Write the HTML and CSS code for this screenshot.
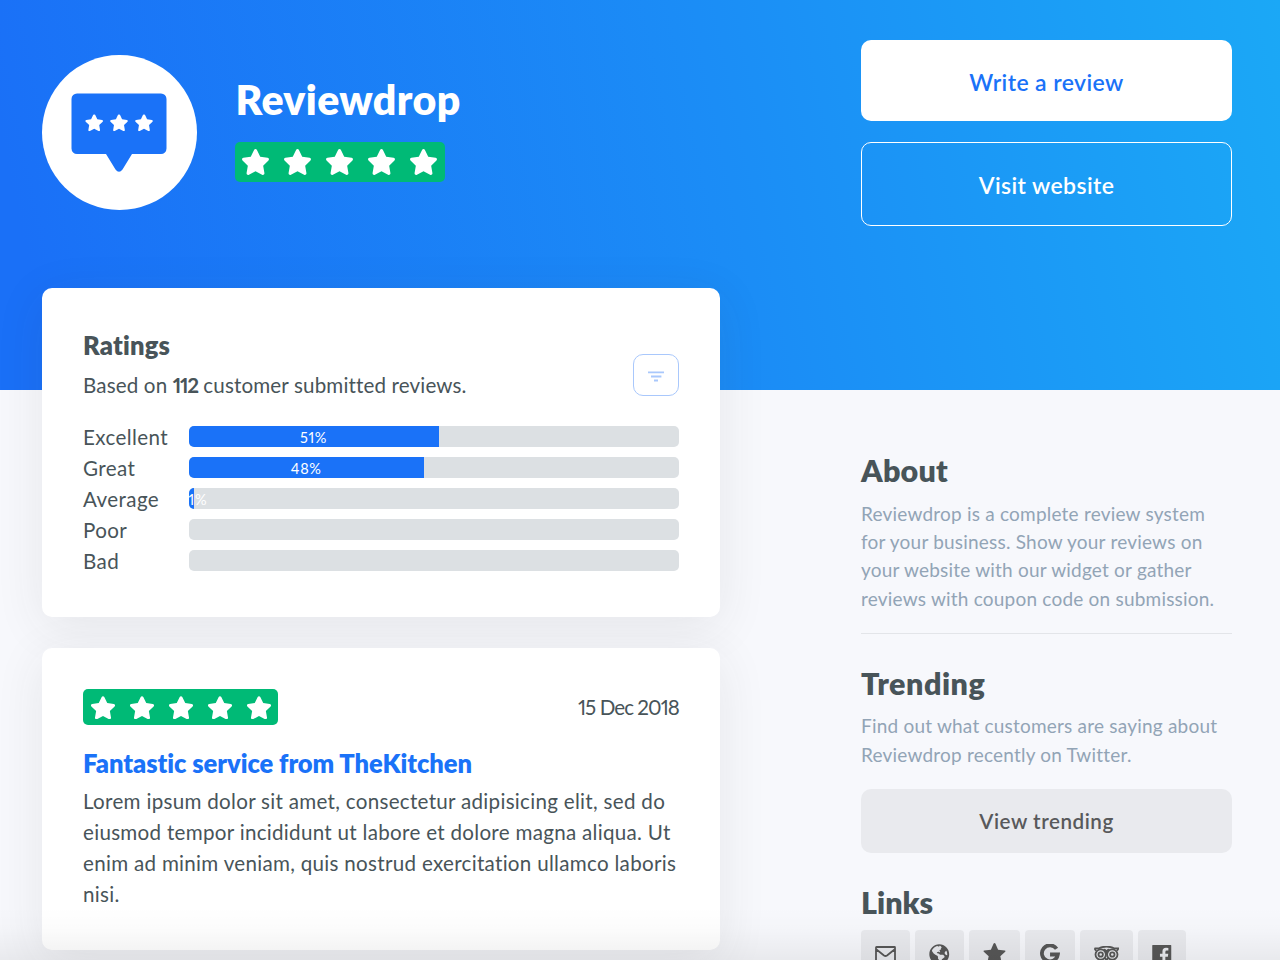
FILE: index.html
```html
<!DOCTYPE html>
<html lang="en">
<head>
<meta charset="utf-8">
<title>Reviewdrop</title>
<link rel="stylesheet" href="styles.css">
</head>
<body>
<svg class="defs" width="0" height="0" aria-hidden="true">
  <symbol id="star" viewBox="0 0 576 512"><path d="M259.3 17.8L194 150.2 47.9 171.5c-26.2 3.8-36.7 36.1-17.7 54.6l105.7 103-25 145.5c-4.5 26.3 23.2 46 46.4 33.7L288 439.6l130.7 68.7c23.2 12.2 50.9-7.4 46.4-33.7l-25-145.5 105.7-103c19-18.5 8.5-50.8-17.7-54.6L382 150.2 316.7 17.8c-11.7-23.6-45.6-23.9-57.4 0z"/></symbol>
</svg>

<header class="hero">
  <div class="brand">
    <div class="logo">
      <svg width="96" height="80" viewBox="0 0 96 80">
        <path class="bubble" d="M6 .5h84a5.500 5.500 0 0 1 5.500 5.500v49.500a5.500 5.500 0 0 1-5.500 5.500H61L51.500 76.500q-3.500 4.500-7 0L35 61H6a5.500 5.500 0 0 1-5.500-5.500V6A5.500 5.500 0 0 1 6 .5z"/>
        <use href="#star" x="13.700" y="21.200" width="19" height="17"/>
        <use href="#star" x="38.500" y="21.200" width="19" height="17"/>
        <use href="#star" x="63.500" y="21.200" width="19" height="17"/>
      </svg>
    </div>
    <div class="brand-text">
      <h1>Reviewdrop</h1>
      <div class="stars stars-lg">
        <svg><use href="#star"/></svg><svg><use href="#star"/></svg><svg><use href="#star"/></svg><svg><use href="#star"/></svg><svg><use href="#star"/></svg>
      </div>
    </div>
  </div>
  <div class="actions">
    <a class="btn btn-white">Write a review</a>
    <a class="btn btn-outline">Visit website</a>
  </div>
</header>

<main class="layout">
  <div class="feed">
    <section class="card ratings">
      <div class="ratings-head">
        <div>
          <h3>Ratings</h3>
          <p class="based">Based on <b>112</b> customer submitted reviews.</p>
        </div>
        <button class="filter" aria-label="Filter">
          <svg width="16" height="11" viewBox="0 0 16 11"><path d="M0 1.300h16M3 5.500h10.400M6 9.500h4"/></svg>
        </button>
      </div>
      <div class="bars">
        <span>Excellent</span><div class="track"><div class="fill" style="width:51%">51%</div></div>
        <span>Great</span><div class="track"><div class="fill" style="width:48%">48%</div></div>
        <span>Average</span><div class="track"><div class="fill" style="width:1.100%">1%</div></div>
        <span>Poor</span><div class="track"></div>
        <span>Bad</span><div class="track"></div>
      </div>
    </section>

    <section class="card review">
      <div class="review-head">
        <div class="stars stars-sm">
          <svg><use href="#star"/></svg><svg><use href="#star"/></svg><svg><use href="#star"/></svg><svg><use href="#star"/></svg><svg><use href="#star"/></svg>
        </div>
        <time>15 Dec 2018</time>
      </div>
      <h3 class="review-title">Fantastic service from TheKitchen</h3>
      <p class="review-body">Lorem ipsum dolor sit amet, consectetur adipisicing elit, sed do<br>eiusmod tempor incididunt ut labore et dolore magna aliqua. Ut<br>enim ad minim veniam, quis nostrud exercitation ullamco laboris<br>nisi.</p>
    </section>
  </div>

  <aside class="side">
    <section class="about">
      <h2>About</h2>
      <p>Reviewdrop is a complete review system<br>for your business. Show your reviews on<br>your website with our widget or gather<br>reviews with coupon code on submission.</p>
    </section>
    <section class="trending">
      <h2>Trending</h2>
      <p>Find out what customers are saying about<br>Reviewdrop recently on Twitter.</p>
      <a class="btn btn-grey">View trending</a>
    </section>
    <section class="links">
      <h2>Links</h2>
      <div class="link-row">
        <a><svg class="mail" width="21" height="17" viewBox="0 0 21 17"><path d="M1 1.500Q1 1 1.500 1h18Q20 1 20 1.500v14q0 .5-.5.500H1.500Q1 16 1 15.500zM1.500 3.500l7.500 6q1.500 1 3 0l7.500-6"/></svg></a>
        <a><svg width="20.500" height="20.500" viewBox="0 0 496 512"><path d="M248 8C111 8 0 119 0 256s111 248 248 248 248-111 248-248S385 8 248 8zm82.300 357.600c-3.900 3.900-8 8-11.300 11.300-3 3-5.100 6.700-6.200 10.700-1.500 5.700-2.700 11.400-4.800 16.900l-17.300 46.700c-13.700 3-28 4.700-42.700 4.700v-27.300c1.700-12.700-7.700-36.500-22.600-51.500-6-6-9.400-14.200-9.400-22.600v-32c0-11.600-6.300-22.300-16.500-28-14.400-8-34.800-19.100-48.800-26.200-11.500-5.800-22.100-13.100-31.700-21.700l-.8-.7c-6.900-6.200-13-13.200-18.200-20.900-9.400-13.800-24.700-36.500-34.600-51.200C67.600 122.200 140.900 66.500 199.200 49.700l28 14c11.500 5.700 25-2.600 25-15.400v-6.100c8.500 1 17.200 2.600 26 5.100l25 24.600c5.800 5.800 5.800 15 0 20.700l-4.200 4.200-9.100 9.100c-2.900 2.900-2.900 7.500 0 10.400l4.200 4.200c2.900 2.900 2.900 7.500 0 10.400l-8 8c-1.500 1.400-3.600 2.200-5.600 2.200H271c-2 0-3.900.8-5.300 2.100l-10.100 9.800c-2.500 2.500-3.200 6.300-1.600 9.500l15.900 31.700c2.700 5.400-1.200 11.800-7.200 11.800h-5.700c-2 0-3.800-.7-5.300-2l-9.400-8.200c-4.300-3.700-10.200-4.900-15.500-3.100l-31.600 10.500c-5 1.700-8.400 6.200-8.400 11.500 0 4.300 2.500 8.300 6.400 10.300l11.200 5.600c9.500 4.800 20 7.300 30.700 7.300s22.900 27.700 32.400 32.500h67.300c8.600 0 16.800 3.400 22.900 9.500l13.800 13.800c5.800 5.800 9 13.600 9 21.800s-3.500 16.500-9.700 22.600zM417 274.200c-5.800-1.400-10.800-5-14.100-9.900l-18-27c-5.400-8.100-5.400-18.600 0-26.600l19.600-29.400c2.300-3.500 5.500-6.300 9.200-8.200l13-6.500c13.500 27 21.300 57.300 21.300 89.400 0 8.700-.7 17.200-1.700 25.600z"/></svg></a>
        <a><svg class="solid-star" width="23" height="22" viewBox="0 0 23 22"><path d="M11.500 0q.6 0 1 .8l2.600 6 6.700.7q1.200.3.400 1.300l-4.900 4.500 1.400 6.600q.1 1.200-1 .7l-6.200-3.300-6.200 3.300q-1.100.5-1-.7l1.400-6.600L.8 8.800Q0 7.800 1.200 7.500l6.700-.7 2.600-6q.4-.8 1-.8z"/></svg></a>
        <a><svg width="21.500" height="21" viewBox="0 0 21 21"><path class="g" d="M17.300 4.800A8 8 0 1 0 18.600 10.500H10.800"/></svg></a>
        <a><svg class="trip" width="25" height="16" viewBox="0 0 25 16"><path d="M.5 2.300h4.500Q12.500-1.200 20 2.300h4.500l-1.500 2.400M.5 2.300L2 4.700M9.500 3.800q2-.5 3 2.500 1-3 3-2.500"/><circle cx="6.700" cy="8.500" r="5.200"/><circle cx="18.300" cy="8.500" r="5.200"/><circle cx="6.700" cy="8.500" r="2.200"/><circle cx="18.300" cy="8.500" r="2.200"/><path d="M11 12l1.500 2.300L14 12"/></svg></a>
        <a><svg width="19.500" height="19" viewBox="0 0 19 19"><path d="M0 .5q0-.5.5-.5h18q.5 0 .5.500v18q0 .5-.5.500h-5.400v-7.300h2.500l.4-2.900h-2.900V7q0-1.400 1.400-1.400h1.600V3q-1-.2-2.300-.2-3.600 0-3.600 3.700v2.300H7.700v2.900h2.500V19H.5q-.5 0-.5-.5z"/></svg></a>
      </div>
    </section>
  </aside>
</main>
<div class="fade"></div>
</body>
</html>
```

FILE: styles.css
```css
* { box-sizing: border-box; }
html, body { height: 960px; overflow: hidden; }
body {
  margin: 0;
  background: #f7f8fc;
  color: #485459;
  font-family: Lato, "Open Sans", sans-serif;
  font-size: 20.600px;
  line-height: 31px;
  letter-spacing: 0.290px;
  font-variant-ligatures: none;
  font-variant-numeric: proportional-nums;
  position: relative;
}
h1, h2, h3, p { margin: 0; white-space: nowrap; }
.defs { position: absolute; }

.hero {
  height: 390px;
  padding: 40px 48px 0 42px;
  display: flex;
  justify-content: space-between;
  align-items: flex-start;
  background: linear-gradient(78deg, #1a70f7 4%, #1b8df6 57%, #1ba8f6 100%);
}
.brand { display: flex; gap: 39px; padding-top: 15px; }
.logo {
  width: 154.500px;
  height: 155px;
  border-radius: 50%;
  background: #fff;
  display: flex;
  justify-content: center;
  padding-top: 38px;
  fill: #fff;
}
.logo svg { margin-left: -0.500px; }
.bubble { fill: #1a72f8; }
h1 {
  color: #fff;
  font-size: 41px;
  line-height: 50px;
  font-weight: 800;
  letter-spacing: 0.400px;
  padding-top: 20px;
}
.stars {
  display: grid;
  grid-template-columns: repeat(5, 1fr);
  place-items: center;
  background: #00ba76;
  fill: #fff;
  border-radius: 5px;
}
.stars-lg { width: 209.500px; height: 40px; margin: 17.300px 0 0 -0.500px; }
.stars-lg svg { width: 29px; height: 26px; }
.stars-sm { width: 195px; height: 36px; padding-top: 1px; }
.stars-sm svg { width: 26px; height: 23.500px; }

.actions { width: 371px; display: grid; gap: 21px; }
.btn {
  display: flex;
  align-items: center;
  justify-content: center;
  border-radius: 10px;
  font-weight: 600;
  font-size: 23px;
  letter-spacing: 0.400px;
}
.btn-white { height: 81px; background: #fff; color: #1a72f8; padding-top: 3px; }
.btn-outline { height: 83.500px; border: 1.500px solid #fff; color: #fff; padding-top: 3px; }
.btn-grey { height: 64px; background: #e9eaee; color: #58595b; font-size: 20.600px; padding-top: 1px; margin-top: 20px; letter-spacing: 0.550px; }

.layout {
  display: grid;
  grid-template-columns: 678px 371px;
  justify-content: space-between;
  padding: 0 48px 0 42px;
  margin-top: -102.500px;
}
.feed { display: grid; gap: 31px; align-content: start; }
.card {
  background: #fff;
  border-radius: 10px;
  padding: 41px;
  box-shadow: 0 10px 50px rgba(50, 50, 60, 0.09);
}
.ratings { height: 329.500px; padding-top: 39px; }
h3 { font-size: 25.500px; line-height: 36px; font-weight: 800; letter-spacing: 0; }
.ratings h3 { letter-spacing: 0.200px; }
.ratings-head { display: flex; justify-content: space-between; }
.based { padding-top: 7px; letter-spacing: 0.140px; }
.based b { letter-spacing: -1.200px; }
.filter {
  width: 46.500px;
  height: 42.500px;
  margin-top: 27px;
  border: 1.500px solid #a9c8fc;
  border-radius: 10px;
  background: #fff;
  padding: 3px 0 0;
  display: flex;
  align-items: center;
  justify-content: center;
}
.filter svg { fill: none; stroke: #a9c8fc; stroke-width: 1.800; }
.bars {
  display: grid;
  grid-template-columns: 105.500px 1fr;
  grid-auto-rows: 31px;
  align-items: center;
  margin-top: 20.500px;
}
.bars span { margin-top: 1px; letter-spacing: 0.400px; }
.track { height: 21px; border-radius: 5px; background: #dce0e3; overflow: hidden; }
.fill {
  height: 100%;
  background: #1a72f8;
  color: #fff;
  font-size: 14.500px;
  line-height: 23px;
  display: flex;
  justify-content: safe center;
  letter-spacing: 0.700px;
}

.review { height: 301.500px; }
.review-head { display: flex; justify-content: space-between; align-items: center; }
.review-head time { letter-spacing: -0.950px; padding-top: 1px; }
.review-title { color: #1a72f8; margin-top: 20px; letter-spacing: -0.040px; }
.review-body { margin-top: 4.500px; }

.side { padding-top: 161px; }
h2 { font-size: 30.500px; line-height: 42px; font-weight: 800; letter-spacing: 0.200px; }
.side p { color: #92a4b6; font-size: 19px; line-height: 28.400px; letter-spacing: 0.210px; margin-top: 9px; }
.about { padding-bottom: 20px; border-bottom: 1px solid #e3e5e9; }
.trending { padding-top: 28px; }
.trending h2 { letter-spacing: 0.500px; }
.trending p { margin-top: 8px; }
.links { padding-top: 28px; }
.links h2 { letter-spacing: 0; }
.link-row { display: flex; gap: 5.300px; margin-top: 7px; }
.link-row a {
  height: 49px;
  padding: 0 14px;
  display: flex;
  align-items: center;
  background: #e9eaee;
  border-radius: 4px;
  fill: #575757;
}
.mail, .trip { fill: none; stroke: #575757; stroke-width: 1.800; }
.g { fill: none; stroke: #575757; stroke-width: 3.800; }
.fade {
  position: absolute;
  left: 0;
  right: 0;
  bottom: 0;
  height: 54px;
  background: linear-gradient(rgba(0, 0, 0, 0), rgba(0, 0, 0, 0.012) 40%, rgba(0, 0, 0, 0.060));
}
```
